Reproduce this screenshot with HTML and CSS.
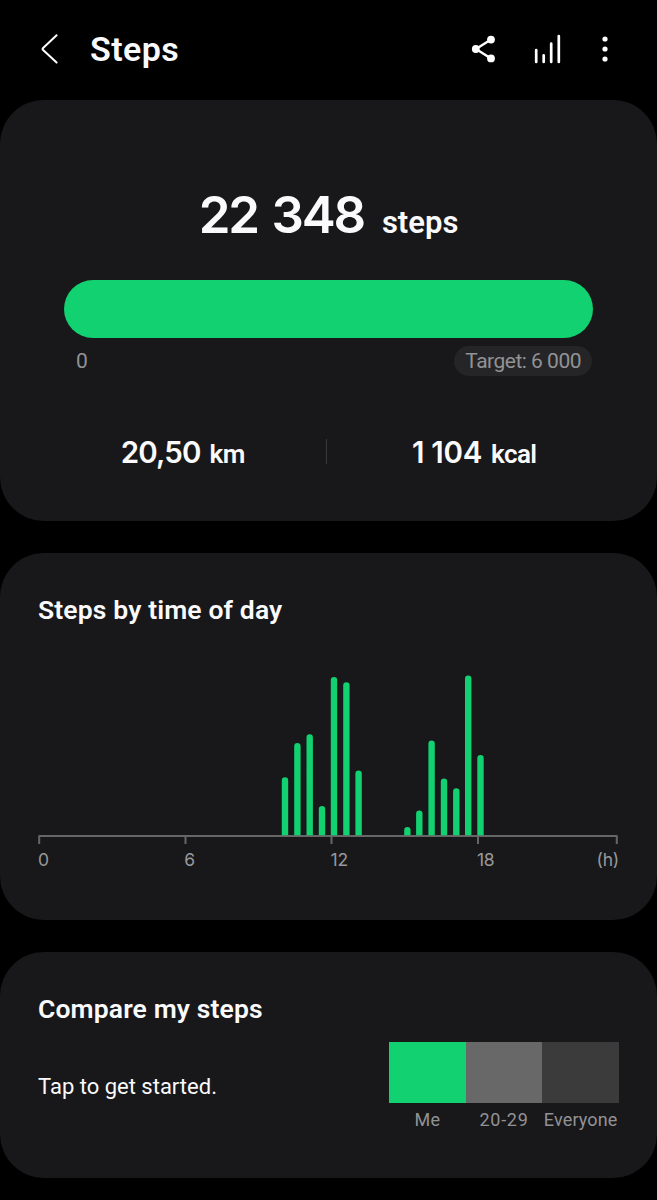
FILE: index.html
```html
<!DOCTYPE html>
<html lang="en">
<head>
<meta charset="utf-8">
<title>Steps</title>
<link rel="stylesheet" href="styles.css">
</head>
<body>
<header class="bar">
  <svg class="back" width="20" height="32" viewBox="0 0 20 32" fill="none" stroke="#fff" stroke-width="2" stroke-linecap="round" stroke-linejoin="round"><path d="M16.6 2.2 3.1 15Q2.1 16 3.1 17L16.6 29.6"/></svg>
  <h1 class="title">Steps</h1>
  <svg class="share" width="26" height="30" viewBox="0 0 26 30" fill="#fff"><path d="M20 5.5 5 15 20 24.5" fill="none" stroke="#fff" stroke-width="2.4"/><circle cx="20" cy="5.6" r="3.9"/><circle cx="4.8" cy="15" r="3.9"/><circle cx="20" cy="24.4" r="3.9"/></svg>
  <svg class="trend" width="30" height="32" viewBox="0 0 30 32" stroke="#fff" stroke-width="2.7" stroke-linecap="round"><path d="M3.2 17v12M10.7 22.4V29M18.2 10.7V29M25.8 3V29"/></svg>
  <svg class="more" width="8" height="30" viewBox="0 0 8 30" fill="#fff"><circle cx="4" cy="5" r="2.6"/><circle cx="4" cy="15" r="2.6"/><circle cx="4" cy="25" r="2.6"/></svg>
</header>
<main class="cards">
  <section class="card summary">
    <div class="count"><span class="count-value">22 348</span><span class="count-unit">steps</span></div>
    <div class="progress"></div>
    <div class="scale"><span class="zero">0</span><span class="target">Target: 6 000</span></div>
    <div class="metrics">
      <div class="metric distance"><span class="num">20,50</span><span class="unit">km</span></div>
      <div class="divider"></div>
      <div class="metric energy"><span class="num">1 104</span><span class="unit">kcal</span></div>
    </div>
  </section>
  <section class="card daily">
    <h2 class="heading">Steps by time of day</h2>
    <svg class="chart" width="581" height="172" viewBox="38 674 581 172" fill="none">
      <path stroke="#666" stroke-width="2" d="M38.5 836H617.5M39.2 836v8M185.5 836v8M331.5 836v8M478 836v8M616.8 836v8"/>
      <defs><clipPath id="plot"><rect x="38" y="674" width="581" height="161.3"/></clipPath></defs>
      <g clip-path="url(#plot)" stroke="#12d170" stroke-width="6.4" stroke-linecap="round">
        <path d="M285 780.5V842M297.4 746.2V842M309.7 737.4V842M322 809.2V842M334 680.3V842M346.4 685.4V842M358.6 773.8V842"/>
        <path d="M407.4 830.2V842M419.3 813.7V842M431.6 743.8V842M444 781.7V842M456.3 791.4V842M468.2 678.6V842M480.5 758.2V842"/>
      </g>
    </svg>
    <div class="hours"><span>0</span><span>6</span><span>12</span><span>18</span><span class="hour-unit">(h)</span></div>
  </section>
  <section class="card compare">
    <div class="compare-text"><h2 class="heading">Compare my steps</h2><p class="hint">Tap to get started.</p></div>
    <div class="groups">
      <div class="group me"><i></i><span>Me</span></div>
      <div class="group peers"><i></i><span>20-29</span></div>
      <div class="group all"><i></i><span>Everyone</span></div>
    </div>
  </section>
</main>
</body>
</html>
```
FILE: styles.css
```css
* { box-sizing: border-box; }
body { margin: 0; background: #000; color: #fafafc; font-family: Roboto, "Liberation Sans", sans-serif; width: 657px; height: 1200px; overflow: hidden; }
h1, h2, p { margin: 0; }
svg { display: block; flex: none; }

.bar { height: 100px; padding: 0 48px 2px 40px; display: flex; align-items: center; }
.title { margin-left: 30px; flex: 1; font-size: 34px; font-weight: 600; line-height: 40px; letter-spacing: .4px; }
.trend { margin-left: 36px; }
.more { margin-left: 38px; }

.cards { display: flex; flex-direction: column; gap: 32px; }
.card { background: #18181a; border-radius: 44px; }

.summary { height: 421px; padding: 85px 64px 0; }
.count { height: 60px; display: flex; justify-content: center; align-items: baseline; line-height: 60px; font-weight: 600; }
.count-value { font-family: Inter, sans-serif; font-size: 51px; letter-spacing: -2.2px; word-spacing: 3px; }
.count-unit { margin-left: 18px; font-size: 31px; }
.progress { height: 57.5px; margin-top: 35px; background: #12d170; border-radius: 29px; }
.scale { display: flex; justify-content: space-between; margin: 8.5px 1px 0 12px; line-height: 30px; font-size: 21px; color: #929295; }
.target { height: 30px; padding: 0 11px; border-radius: 15px; background: #252527; letter-spacing: -.5px; }
.metrics { display: flex; align-items: center; margin-top: 57px; height: 36px; line-height: 36px; font-weight: 600; }
.metric { flex: 1; display: flex; align-items: baseline; justify-content: center; padding-top: 4px; }
.distance { padding-right: 24px; }
.energy { padding-left: 29px; }
.num { font-family: Inter, sans-serif; font-size: 29.5px; letter-spacing: -.9px; }
.energy .num { letter-spacing: -.3px; }
.unit { margin-left: 9px; font-size: 26px; letter-spacing: -.6px; }
.divider { width: 1px; height: 25px; background: #39393b; }

.heading { font-size: 26.5px; font-weight: 600; line-height: 32px; letter-spacing: .13px; }
.daily { height: 367px; padding: 41px 38px 0; }
.chart { margin-top: 48px; }
.hours { display: grid; grid-template-columns: repeat(3, 146.3px) 1fr auto; padding-top: 3px; line-height: 22px; font-family: Inter, sans-serif; font-size: 17.5px; letter-spacing: -.2px; color: #98989a; }

.compare { height: 226px; padding: 41px 38px 0; display: flex; justify-content: space-between; }
.hint { margin-top: 47px; font-size: 22px; line-height: 30px; }
.groups { display: flex; margin-top: 49px; width: 230px; }
.group { flex: 1; display: flex; flex-direction: column; align-items: center; font-size: 18px; line-height: 22px; color: #929295; }
.group span { letter-spacing: .15px; }
.peers span { letter-spacing: .7px; }
.group i { width: 100%; height: 61px; margin-bottom: 6px; }
.me i { background: #12d170; }
.peers i { background: #686868; }
.all i { background: #3b3b3c; }
```
